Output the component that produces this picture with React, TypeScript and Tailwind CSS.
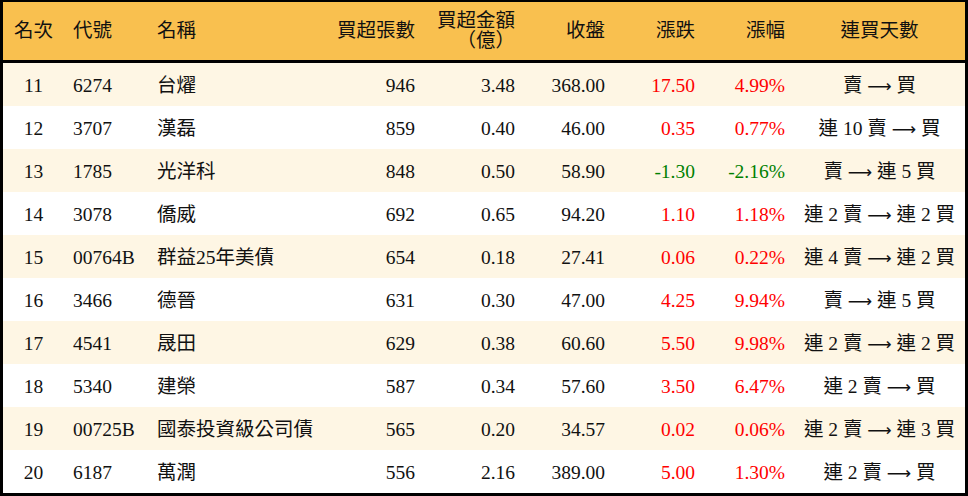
import React from 'react';

type Row = {
  rank: number;
  code: string;
  name: string;
  lots: string;
  amount: string;
  close: string;
  change: string;
  pct: string;
  from: string;
  to: string;
};

const rows: Row[] = [
  { rank: 11, code: '6274', name: '台燿', lots: '946', amount: '3.48', close: '368.00', change: '17.50', pct: '4.99%', from: '賣', to: '買' },
  { rank: 12, code: '3707', name: '漢磊', lots: '859', amount: '0.40', close: '46.00', change: '0.35', pct: '0.77%', from: '連 10 賣', to: '買' },
  { rank: 13, code: '1785', name: '光洋科', lots: '848', amount: '0.50', close: '58.90', change: '-1.30', pct: '-2.16%', from: '賣', to: '連 5 買' },
  { rank: 14, code: '3078', name: '僑威', lots: '692', amount: '0.65', close: '94.20', change: '1.10', pct: '1.18%', from: '連 2 賣', to: '連 2 買' },
  { rank: 15, code: '00764B', name: '群益25年美債', lots: '654', amount: '0.18', close: '27.41', change: '0.06', pct: '0.22%', from: '連 4 賣', to: '連 2 買' },
  { rank: 16, code: '3466', name: '德晉', lots: '631', amount: '0.30', close: '47.00', change: '4.25', pct: '9.94%', from: '賣', to: '連 5 買' },
  { rank: 17, code: '4541', name: '晟田', lots: '629', amount: '0.38', close: '60.60', change: '5.50', pct: '9.98%', from: '連 2 賣', to: '連 2 買' },
  { rank: 18, code: '5340', name: '建榮', lots: '587', amount: '0.34', close: '57.60', change: '3.50', pct: '6.47%', from: '連 2 賣', to: '買' },
  { rank: 19, code: '00725B', name: '國泰投資級公司債', lots: '565', amount: '0.20', close: '34.57', change: '0.02', pct: '0.06%', from: '連 2 賣', to: '連 3 買' },
  { rank: 20, code: '6187', name: '萬潤', lots: '556', amount: '2.16', close: '389.00', change: '5.00', pct: '1.30%', from: '連 2 賣', to: '買' },
];

const cols = 'grid grid-cols-[61px_84px_176px_100px_100px_90px_90px_90px_171px]';

export default function App() {
  return (
    <div
      className="w-[968px] h-[496px] bg-white text-[19.5px] leading-[20px] text-[#111]"
      style={{ fontFamily: '"Liberation Serif", "Noto Sans CJK TC", serif' }}
    >
      <div className="border-black border-t-2 border-x-[3px] border-b-[3px]">
        {/* header */}
        <div className={`${cols} h-[61px] bg-[#F9C04F] border-b-[3px] border-black items-center`}>
          <div className="text-center">名次</div>
          <div className="pl-[9px]">代號</div>
          <div className="pl-[9px]">名稱</div>
          <div className="text-right pr-[9px]">買超張數</div>
          <div className="text-right pr-[9px]">
            <div>買超金額</div>
            <div>（億）</div>
          </div>
          <div className="text-right pr-[9px]">收盤</div>
          <div className="text-right pr-[9px]">漲跌</div>
          <div className="text-right pr-[9px]">漲幅</div>
          <div className="text-center">連買天數</div>
        </div>

        {rows.map((r, i) => {
          const color = r.change.startsWith('-') ? 'text-[#008000]' : 'text-[#FF0000]';
          return (
            <div
              key={r.rank}
              className={`${cols} h-[43px] items-center pt-[2px] ${i % 2 === 0 ? 'bg-[#FEF6E4]' : 'bg-white'}`}
            >
              <div className="text-center">{r.rank}</div>
              <div className="pl-[9px]">{r.code}</div>
              <div className="pl-[9px] whitespace-nowrap">{r.name}</div>
              <div className="text-right pr-[9px]">{r.lots}</div>
              <div className="text-right pr-[9px]">{r.amount}</div>
              <div className="text-right pr-[9px]">{r.close}</div>
              <div className={`text-right pr-[9px] ${color}`}>{r.change}</div>
              <div className={`text-right pr-[9px] ${color}`}>{r.pct}</div>
              <div className="text-center whitespace-nowrap">
                {r.from}{' '}
                <span style={{ fontFamily: '"DejaVu Sans", sans-serif' }} className="text-[17px]">⟶</span>{' '}
                {r.to}
              </div>
            </div>
          );
        })}
      </div>
    </div>
  );
}
